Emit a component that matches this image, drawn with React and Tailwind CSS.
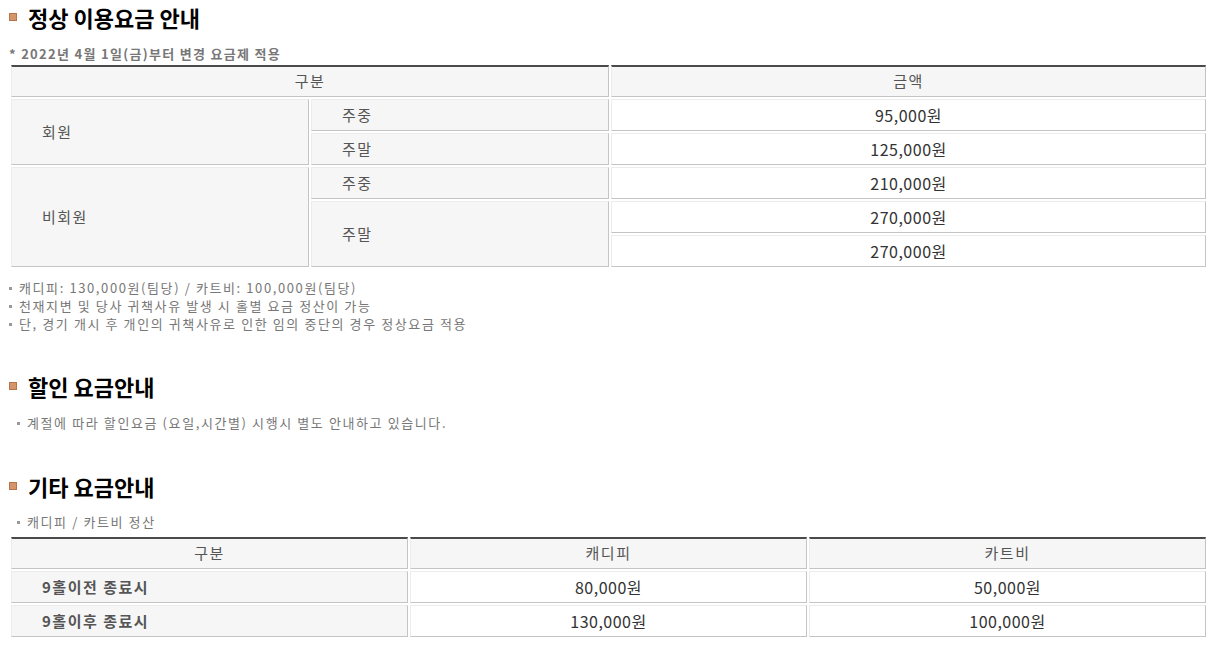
const font = { fontFamily: '"Noto Sans CJK KR", "Noto Sans", sans-serif' };

const Title = ({ children, className = "" }) => (
  <h2 className={`flex items-center h-[34px] ${className}`}>
    <span className="w-[8px] h-[8px] bg-[#d49568] border border-[#b57449] mr-[11px] shrink-0" />
    <span className="text-[22px] font-bold text-black leading-none">
      {children}
    </span>
  </h2>
);

const Note = ({ children, indent = false }) => (
  <li className={`flex items-center h-[18px] text-[13px] tracking-[1.6px] text-[#777] ${indent ? "pl-[8px]" : ""}`}>
    <span className="w-[3px] h-[3px] bg-[#999] mr-[7px] shrink-0" />
    {children}
  </li>
);

// cell borders: light on top/left, darker on right/bottom
const base =
  "h-[32px] p-0 border border-l-[#ececec] border-r-[#c4c4c4] border-b-[#c4c4c4]";
const head = `${base} border-t-2 border-t-[#4a4a4a] bg-[#f6f6f6] text-[#555] text-center text-[15px] font-normal tracking-[1.5px]`;
const label = `${base} border-t-[#ececec] bg-[#f6f6f6] text-[#555] text-left pl-[30px] text-[15px] tracking-[1.5px]`;
const value = `${base} border-t-[#ececec] bg-white text-[#333] text-center text-[16px] tracking-[0.5px]`;

export default function App() {
  return (
    <div className="bg-white pl-[9px] pr-[7px] pt-0 pb-[14px]" style={font}>
      <Title>정상 이용요금 안내</Title>
      <p className="mt-[11px] h-[18px] flex items-center text-[13px] font-bold tracking-[1.3px] text-[#777]">
        * 2022년 4월 1일(금)부터 변경 요금제 적용
      </p>
      <table className="w-full border-separate border-spacing-[2px] table-fixed">
        <colgroup>
          <col className="w-[298px]" />
          <col className="w-[298px]" />
          <col />
        </colgroup>
        <thead>
          <tr>
            <th colSpan={2} className={head}>구분</th>
            <th className={head}>금액</th>
          </tr>
        </thead>
        <tbody>
          <tr>
            <td rowSpan={2} className={label}>회원</td>
            <td className={label}>주중</td>
            <td className={value}>95,000원</td>
          </tr>
          <tr>
            <td className={label}>주말</td>
            <td className={value}>125,000원</td>
          </tr>
          <tr>
            <td rowSpan={3} className={label}>비회원</td>
            <td className={label}>주중</td>
            <td className={value}>210,000원</td>
          </tr>
          <tr>
            <td rowSpan={2} className={label}>주말</td>
            <td className={value}>270,000원</td>
          </tr>
          <tr>
            <td className={value}>270,000원</td>
          </tr>
        </tbody>
      </table>
      <ul className="mt-[10px]">
        <Note>캐디피: 130,000원(팀당) / 카트비: 100,000원(팀당)</Note>
        <Note>천재지변 및 당사 귀책사유 발생 시 홀별 요금 정산이 가능</Note>
        <Note>단, 경기 개시 후 개인의 귀책사유로 인한 임의 중단의 경우 정상요금 적용</Note>
      </ul>

      <Title className="mt-[36px]">할인 요금안내</Title>
      <ul className="mt-[11px]">
        <Note indent>계절에 따라 할인요금 (요일,시간별) 시행시 별도 안내하고 있습니다.</Note>
      </ul>

      <Title className="mt-[37px]">기타 요금안내</Title>
      <ul className="mt-[10px]">
        <Note indent>캐디피 / 카트비 정산</Note>
      </ul>
      <table className="mt-[4px] w-full border-separate border-spacing-[2px] table-fixed">
        <thead>
          <tr>
            <th className={head}>구분</th>
            <th className={head}>캐디피</th>
            <th className={head}>카트비</th>
          </tr>
        </thead>
        <tbody>
          <tr>
            <td className={`${label} font-bold`}>9홀이전 종료시</td>
            <td className={value}>80,000원</td>
            <td className={value}>50,000원</td>
          </tr>
          <tr>
            <td className={`${label} font-bold`}>9홀이후 종료시</td>
            <td className={value}>130,000원</td>
            <td className={value}>100,000원</td>
          </tr>
        </tbody>
      </table>
    </div>
  );
}
